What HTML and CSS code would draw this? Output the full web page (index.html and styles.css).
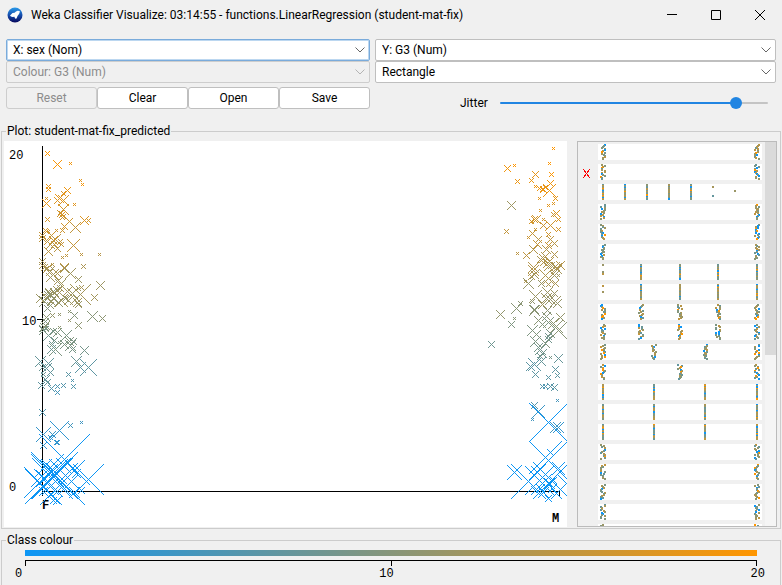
FILE: index.html
```html
<!DOCTYPE html>
<html lang="en">
<head>
<meta charset="utf-8">
<title>Weka Classifier Visualize</title>
<link rel="stylesheet" href="styles.css">
</head>
<body>
<header class="titlebar">
  <svg class="logo" viewBox="0 0 16 16" aria-hidden="true">
    <defs><linearGradient id="sky" x1="0" y1="0" x2="0" y2="1"><stop offset="0" stop-color="#2a9bea"/><stop offset=".5" stop-color="#164fae"/><stop offset="1" stop-color="#07075c"/></linearGradient></defs>
    <circle cx="8" cy="8" r="7.5" fill="url(#sky)"/>
    <path d="M3 8.500 5.500 6 7.500 5.800 9 4.500 10.500 3.800 12.800 4 12.500 6 11.500 7.800 10.500 9 10 10.500 9 12 7.800 11 7.500 9.800 5.500 10 4 9.600Z" fill="#fff"/>
  </svg>
  <h1 class="title">Weka Classifier Visualize: 03:14:55 - functions.LinearRegression (student-mat-fix)</h1>
  <div class="window-buttons">
    <button type="button" aria-label="Minimize"><svg viewBox="0 0 12 12"><path d="M1 5.500H11"/></svg></button>
    <button type="button" aria-label="Maximize"><svg viewBox="0 0 12 12"><path d="M1.500 1.500H10.500V10.500H1.500Z"/></svg></button>
    <button type="button" aria-label="Close"><svg viewBox="0 0 12 12"><path d="M1 1 11 11M11 1 1 11"/></svg></button>
  </div>
</header>

<main>
  <section class="controls">
    <div class="column">
      <div class="combo focused"><select aria-label="X axis"><option>X: sex (Nom)</option></select><svg viewBox="0 0 10 6"><path d="M.5.500 5 5 9.500.500"/></svg></div>
      <div class="combo disabled"><select aria-label="Colour" disabled><option>Colour: G3 (Num)</option></select><svg viewBox="0 0 10 6"><path d="M.5.500 5 5 9.500.500"/></svg></div>
      <div class="buttons">
        <button type="button" disabled>Reset</button>
        <button type="button">Clear</button>
        <button type="button">Open</button>
        <button type="button">Save</button>
      </div>
    </div>
    <div class="column">
      <div class="combo"><select aria-label="Y axis"><option>Y: G3 (Num)</option></select><svg viewBox="0 0 10 6"><path d="M.5.500 5 5 9.500.500"/></svg></div>
      <div class="combo"><select aria-label="Selection shape"><option>Rectangle</option></select><svg viewBox="0 0 10 6"><path d="M.5.500 5 5 9.500.500"/></svg></div>
      <div class="jitter">
        <label for="jitter">Jitter</label>
        <input id="jitter" type="range" min="0" max="50" value="45">
      </div>
    </div>
  </section>

  <fieldset class="group">
    <legend>Plot: student-mat-fix_predicted</legend>
    <div class="plot-row">
      <svg class="plot" id="plot" viewBox="4 141 563 386" preserveAspectRatio="xMinYMin meet" role="img" aria-label="G3 against sex">
        <path class="axis" d="M42.500 146V496M42 491.500H560M559.500 491V497M37 319.500H42"/>
        <g class="tick"><text x="9" y="159">20</text><text x="22" y="325">10</text><text x="9" y="491">0</text></g>
        <g class="tick nominal"><text x="42" y="509">F</text><text x="552" y="522">M</text></g>
        <g id="points"></g>
      </svg>
      <div class="attributes">
        <div class="strips" id="strips"></div>
        <div class="scroll-track"><div class="scroll-thumb"></div></div>
      </div>
    </div>
  </fieldset>

  <fieldset class="group">
    <legend>Class colour</legend>
    <div class="scale">
      <div class="ramp"></div>
      <div class="ruler"></div>
      <div class="scale-labels"><span>0</span><span>10</span><span>20</span></div>
    </div>
  </fieldset>
</main>
<script src="plot.js"></script>
</body>
</html>
```
FILE: styles.css
```css
* { box-sizing: border-box; }
body {
  margin: 0;
  min-height: 100vh;
  overflow: hidden;
  background: #f0f0f0;
  color: #000;
  font: 12px/16px Roboto, "Open Sans", sans-serif;
}
button, select, input { font: inherit; color: inherit; margin: 0; }

.titlebar { display: flex; align-items: center; height: 30px; padding-left: 7px; }
.logo { width: 16px; height: 16px; margin-right: 8px; }
.title { flex: 1; margin: 0; font-size: 12px; font-weight: 400; white-space: nowrap; }
.window-buttons { display: flex; }
.window-buttons button {
  display: grid; place-items: center; width: 44px; height: 28px;
  padding: 0; border: 0; background: none;
}
.window-buttons svg { width: 12px; height: 12px; fill: none; stroke: #000; }

.controls {
  display: grid;
  grid-template-columns: 364fr 401fr;
  gap: 5px;
  padding: 9px 6px 12px;
}
.combo { position: relative; height: 22px; }
.combo select {
  appearance: none; display: block; width: 100%; height: 22px;
  padding: 0 24px 0 6px; border: 1px solid #bfbfbf; border-radius: 2px; background: #fff;
}
.combo.focused select { border-color: #7aabdb; box-shadow: inset 0 0 0 1px #bcd7f0; outline: 0; }
.combo.disabled select { border-color: #cdcdcd; background: #f0f0f0; color: #8c8c8c; opacity: 1; }
.combo svg {
  position: absolute; right: 5px; top: 8px; width: 10px; height: 6px;
  fill: none; stroke: #666; pointer-events: none;
}
.combo.disabled svg { stroke: #b4b4b4; }
.buttons { display: grid; grid-template-columns: repeat(4, 1fr); margin-top: 4px; }
.buttons button {
  height: 22px; padding: 0; border: 1px solid #bfbfbf; border-radius: 3px; background: #fff;
}
.buttons button:disabled { border-color: #cdcdcd; background: #f0f0f0; color: #8c8c8c; }
.jitter {
  display: grid; grid-template-columns: 40px 1fr; align-items: center;
  padding: 12px 8px 0 85px;
}
.jitter input {
  appearance: none; width: 100%; min-width: 0; height: 12px; background: none;
}
.jitter input::-webkit-slider-runnable-track {
  height: 2px; border-radius: 1px;
  background: linear-gradient(to right, #2185e2 88%, #c4c4c4 88%);
}
.jitter input::-webkit-slider-thumb {
  appearance: none; width: 12px; height: 12px; margin-top: -5px;
  border-radius: 50%; background: #2185e2;
}

.group {
  min-width: 0; margin: 0 1px 3px; padding: 2px 2px 1px;
  border: 1px solid #ccc;
}
.group legend { margin-left: 2px; padding: 0 1px; }
.plot-row { display: grid; grid-template-columns: 563fr 200fr; gap: 10px; padding-right: 1px; }
.plot { width: 100%; background: #fff; }
.axis { fill: none; stroke: #000; shape-rendering: crispEdges; }
.tick, .scale-labels { font: 12px/14px "Liberation Mono", monospace; }
.nominal { font-weight: 700; }
.attributes {
  min-width: 0; height: 386px; overflow: hidden;
  display: flex; border: 1px solid #bbb;
}
.strips { flex: 1; min-width: 0; }
.strips svg { display: block; width: 100%; }
.scroll-track { width: 11px; background: #f5f5f5; }
.scroll-thumb { height: 213px; background: #dadada; }

.scale { padding: 0 21px; }
.ramp { height: 6px; background: linear-gradient(to right, #0d96f5, #87967a, #ff9600); }
.ruler {
  height: 6px; margin-top: 4px;
  border: 1px solid #000; border-bottom: 0;
  background: linear-gradient(#000, #000) center / 1px 100% no-repeat;
}
.scale-labels { display: flex; justify-content: space-between; margin: 1px -8px 8px -10px; }
```
FILE: plot.js
```js
const SVG = "http://www.w3.org/2000/svg";

function ramp(t) {
  t = Math.max(0, Math.min(1, t));
  return `rgb(${Math.round(13 + 242 * t)},150,${Math.round(245 * (1 - t))})`;
}

function add(parent, name, attributes) {
  const node = document.createElementNS(SVG, name);
  for (const key in attributes) node.setAttribute(key, attributes[key]);
  parent.appendChild(node);
  return node;
}

let seed = 17;
function random() {
  seed = (seed * 1103515245 + 12345) % 2147483648;
  return seed / 2147483648;
}

// Each point is x, y and half the size of its cross (the prediction error).
const points = `
47,153,2 57,164,4 70,163,1 80,180,1 82,184,1 48,186,2 48,189,2 67,190,3 63,193,2 46,203,4 46,198,1 59,198,4
57,200,3 63,200,5 74,204,1 63,209,5 47,219,2 60,213,3 62,214,3 62,217,2 63,216,2 69,221,3 84,220,4 88,220,2
75,227,5 64,226,3 62,230,2 56,230,1 45,230,2 46,231,2 48,231,1 51,235,4 42,235,3 55,239,5 53,240,4 60,241,2
61,244,2 73,245,6 42,238,3 47,241,3 50,244,4 54,244,3 57,248,3 48,251,4 81,254,1 66,255,1 99,254,1 62,257,1
42,261,3 42,265,3 44,267,3 52,264,1 52,268,2 64,268,4 46,268,2 47,268,4 64,267,4 83,266,2 70,273,5
53,274,5 57,273,3 78,279,3 50,277,4 60,284,5 100,285,4 78,288,2 81,287,2 94,297,3 67,291,4 72,293,5 80,294,10
57,290,4 56,295,5 50,294,5 46,297,5 40,298,4 48,291,3 44,301,5 53,298,4 61,300,6 65,298,3 58,302,4 50,305,3
47,308,3 77,302,4 78,304,3 76,298,3 68,300,4 92,316,5 102,318,3 74,315,3 69,311,1 69,320,1 59,314,1 52,315,2
46,317,3 45,321,3 78,325,3 44,327,4 42,328,3 46,328,2 59,327,1 57,332,4 53,331,3 66,335,5 48,335,5 59,342,1
52,344,3 54,340,3 64,344,4 70,345,5 69,341,4 73,341,3 72,349,3 55,349,6 84,350,4 51,349,4 40,361,5 48,363,5
76,361,5 80,367,5 88,367,8 46,368,5 42,367,3 50,372,3 43,374,2 68,374,2 72,380,1 45,379,4 73,386,2 57,386,2
63,385,2 51,388,3 41,385,3 47,382,3 57,392,2 42,412,3 81,422,1 70,425,2 52,434,3 43,434,7 43,445,3 50,437,2
56,442,2 59,430,9 57,442,2 45,325,4 43,330,4 47,294,3 54,292,4 51,301,4 60,288,3 58,280,4 49,272,3
64,459,25 88,479,15 54,475,23 42,486,17 39,482,15 47,470,16 52,478,20 62,482,22 56,473,10 49,472,8 63,465,7
58,468,9 65,475,8 72,468,5 76,473,4 71,481,6 64,488,6 57,491,5 51,494,3 53,500,3 57,500,4 44,478,8 38,473,4
46,464,5 50,486,8 74,492,5 81,490,3 43,491,4
553,148,1 549,163,1 507,168,3 514,165,1 535,174,3 551,174,2 517,181,2 531,180,2 550,183,3 535,186,1 539,188,2
542,189,2 545,187,2 543,189,3 549,190,6 539,198,1 555,198,2 553,203,1 548,205,1 511,205,4 540,210,1 556,213,3
553,214,2 536,219,4 534,219,3 531,221,2 543,219,1 558,219,2 543,225,3 550,225,5 535,229,1 506,231,2 558,229,2
532,233,3 548,234,2 528,237,1 538,239,3 550,239,3 548,245,3 554,243,3 537,244,4 533,249,4 517,253,1 526,255,3
546,249,4 545,256,4 543,258,4 540,259,3 554,254,3 549,261,4 548,266,4 556,268,5 555,266,4 533,267,5 560,265,4
543,262,3 547,263,4 551,265,3 557,269,4 533,270,5 534,274,4 531,276,3 545,275,6 548,278,5 554,275,4 558,275,1
525,281,1 528,283,5 555,283,3 541,283,3 548,284,2 547,292,5 535,296,6 546,298,5 554,293,3 550,299,5 532,301,2
520,303,2 516,308,5 555,301,5 557,303,4 542,304,4 534,309,4 547,310,4 500,314,4 514,318,1 511,324,3 534,310,5
546,316,4 560,317,4 538,320,4 548,322,5 542,324,3 553,323,5 556,326,6 558,330,9 532,330,5 536,334,4 548,336,3
550,333,4 535,341,5 545,343,4 491,344,3 548,339,3 538,347,4 540,349,5 542,353,4 540,356,3 550,357,1 558,358,4
534,364,6 530,366,4 541,361,4 535,374,3 548,377,2 555,369,3 557,375,2 542,386,2 545,386,2 550,386,3 554,387,3
557,400,1 534,405,3 532,419,1 538,411,6 548,422,19 555,427,5 558,427,5 548,460,19 550,452,3 545,457,16
558,468,6 514,472,7 528,481,17 537,472,6 551,480,18 539,480,14 545,480,6 553,480,3 540,488,4 546,487,5
552,488,4 549,483,5 543,492,5 535,490,4 556,493,5 566,483,8 548,498,3`;

// Crosses that belong to mid-range values although they sit among the brightest ones.
const layer = document.getElementById("points");
for (const item of points.trim().split(/\s+/)) {
  const [x, y, r] = item.split(",").map(Number);
  let t = (491 - y) / 335 + (random() - 0.5) * 0.1;
  if (y > 450 || r > 14) t = 0;
  if (x === 511 && y === 205) t = 0.6;
  let d = "";
  for (let i = -r; i <= r; i++) {
    d += `M${x + i} ${y + i}h1v1h-1z`;
    if (i) d += `M${x + i} ${y - i}h1v1h-1z`;
  }
  add(layer, "path", { d, fill: ramp(t), "shape-rendering": "crispEdges" });
}

// Attribute strips: bars are solid columns, clouds are jittered, dots are sparse.
const rows = [
  { cloud: [5, 159] },
  { cloud: [5, 159] },
  { bar: [5, 27, 49, 71, 93], dots: [[115, 2], [115, 11], [137, 6]] },
  { cloud: [5, 159] },
  { cloud: [5, 159] },
  { cloud: [5, 159] },
  { bar: [43, 82, 120, 159], dots: [[5, 0], [5, 7], [5, 9]] },
  { bar: [43, 82, 120, 159], dots: [[5, 1], [5, 7]] },
  { cloud: [5, 43, 82, 120, 159] },
  { cloud: [5, 43, 82, 120, 159] },
  { cloud: [5, 56, 107, 159] },
  { cloud: [5, 82, 159] },
  { bar: [5, 56, 107, 159] },
  { bar: [5, 56, 107, 159] },
  { bar: [5, 56, 107, 159] },
  { cloud: [5, 159] },
  { cloud: [5, 159] },
  { cloud: [5, 159] },
  { cloud: [5, 159] },
  { cloud: [5, 159] }
];

function stripColour() {
  const pick = random();
  if (pick < 0.14) return ramp(0);
  if (pick < 0.22) return ramp(1);
  return ramp(0.35 + random() * 0.4);
}

const strips = add(document.getElementById("strips"), "svg", {
  viewBox: "578 142 187 398", "shape-rendering": "crispEdges"
});
rows.forEach((row, index) => {
  const top = 144 + index * 20;
  const dot = (x, y) => add(strips, "rect", { x: 598 + x - 1, y: top + y, width: 2, height: 2, fill: stripColour() });
  add(strips, "rect", { x: 598, y: top, width: 164, height: 16, fill: "#fff" });
  for (const x of row.bar || []) for (let y = 0; y < 15; y++) dot(x, y);
  for (const x of row.cloud || []) {
    for (let y = 0; y < 15; y++) dot(x - 2 + Math.floor(random() * 5), y);
  }
  for (const [x, y] of row.dots || []) dot(x, y);
});
add(strips, "path", { d: "M583 169 590 178M590 169 583 178", stroke: "#f00", fill: "none" });
```
